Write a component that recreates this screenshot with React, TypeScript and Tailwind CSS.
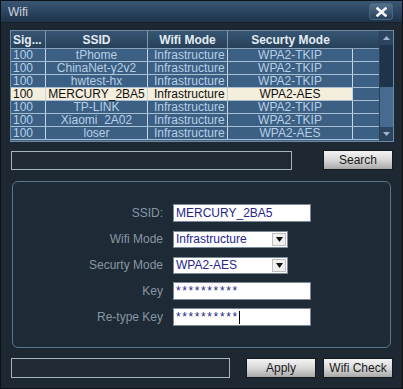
import React from 'react';

const rows = [
  { sig: '100', ssid: 'tPhome', mode: 'Infrastructure', sec: 'WPA2-TKIP' },
  { sig: '100', ssid: 'ChinaNet-y2v2', mode: 'Infrastructure', sec: 'WPA2-TKIP' },
  { sig: '100', ssid: 'hwtest-hx', mode: 'Infrastructure', sec: 'WPA2-TKIP' },
  { sig: '100', ssid: 'MERCURY_2BA5', mode: 'Infrastructure', sec: 'WPA2-AES', selected: true },
  { sig: '100', ssid: 'TP-LINK', mode: 'Infrastructure', sec: 'WPA2-TKIP' },
  { sig: '100', ssid: 'Xiaomi_2A02', mode: 'Infrastructure', sec: 'WPA2-TKIP' },
  { sig: '100', ssid: 'loser', mode: 'Infrastructure', sec: 'WPA2-AES' },
];

const font = { fontFamily: '"Liberation Sans", Arial, sans-serif' };

function Button({ label, className }: { label: string; className: string }) {
  return (
    <div
      className={`flex items-center justify-center h-[20px] border border-[#11191f] bg-gradient-to-b from-[#f4f4f4] via-[#d8d8d8] to-[#a9a9a9] text-[12px] text-[#1a1a1a] ${className}`}
    >
      {label}
    </div>
  );
}

function Select({ value }: { value: string }) {
  return (
    <div className="flex items-center w-[115px] h-[17px] bg-white border border-[#7a8a9a]">
      <span className="flex-1 pl-[2px] text-[12px] text-[#26268a] leading-none">{value}</span>
      <div className="flex items-center justify-center w-[14px] h-[13px] mr-[1px] bg-[#f0f0f0] border border-[#c0c0c0]">
        <svg width="7" height="5" viewBox="0 0 7 5">
          <path d="M0 0 L7 0 L3.5 5 Z" fill="#111" />
        </svg>
      </div>
    </div>
  );
}

function Field({ label, children }: { label: string; children: React.ReactNode }) {
  return (
    <div className="flex items-center">
      <div className="w-[160px] text-right text-[12px] text-[#8796a4] pr-[10px]">{label}</div>
      {children}
    </div>
  );
}

function TextBox({ value, caret, secret }: { value: string; caret?: boolean; secret?: boolean }) {
  return (
    <div className="flex items-center w-[138px] h-[18px] bg-white border border-[#7a8a9a] pl-[2px]">
      <span className={`text-[12px] text-[#26268a] leading-none ${secret ? 'tracking-[1.6px]' : ''}`}>{value}</span>
      {caret && <span className="w-[1px] h-[13px] bg-black" />}
    </div>
  );
}

export default function App() {
  return (
    <div
      className="w-[403px] h-[389px] bg-[#1d2833] border border-[#0c1218] flex flex-col overflow-hidden"
      style={font}
    >
      {/* title bar */}
      <div className="h-[22px] flex items-center justify-between bg-gradient-to-b from-[#3a5774] via-[#2b4561] to-[#1f3349] border-b border-[#16222e] pl-[7px] pr-[9px]">
        <span className="text-[12px] text-[#c9d4de]">Wifi</span>
        <div className="w-[24px] h-[17px] flex items-center justify-center bg-gradient-to-b from-[#53718d] to-[#2a425a] border border-[#4a6580] rounded-[3px]">
          <svg width="11" height="10" viewBox="0 0 11 10">
            <path d="M1.5 1.5 L9.5 8.5 M9.5 1.5 L1.5 8.5" stroke="#f4f6f8" strokeWidth="2.6" strokeLinecap="square" />
          </svg>
        </div>
      </div>

      {/* table */}
      <div className="mt-[7px] ml-[9px] w-[384px] h-[112px] border border-[#6f89a2] flex bg-[#3c5f84]">
        <div className="flex-1 flex flex-col">
          <div className="flex h-[18px] bg-gradient-to-b from-[#375674] to-[#264058] text-[12px] font-bold text-[#e4ebf2] border-b border-[#8aa3ba]">
            <div className="w-[35px] pl-[2px] flex items-center border-r border-[#7f97ad]">Sig...</div>
            <div className="w-[102px] flex items-center justify-center border-r border-[#7f97ad]">SSID</div>
            <div className="w-[80px] flex items-center justify-center border-r border-[#7f97ad]">Wifi Mode</div>
            <div className="w-[125px] flex items-center justify-center">Securty Mode</div>
            <div className="flex-1" />
          </div>
          {rows.map((r, i) => (
            <div
              key={i}
              className={`flex h-[13px] text-[12px] leading-none border-b border-[#a9c0d4] ${
                r.selected ? 'bg-[#f4eedc] text-[#111]' : 'text-[#b7cfe6]'
              }`}
            >
              <div className="w-[35px] pl-[2px] flex items-center border-r border-[#c5d6e4]">{r.sig}</div>
              <div className="w-[102px] flex items-center justify-center border-r border-[#c5d6e4]">{r.ssid}</div>
              <div className="w-[80px] flex items-center pl-[6px] border-r border-[#c5d6e4]">{r.mode}</div>
              <div className="w-[125px] flex items-center justify-center border-r border-[#c5d6e4]">{r.sec}</div>
              <div className="flex-1 bg-[#3c5f84]" />
            </div>
          ))}
        </div>
        {/* scrollbar */}
        <div className="w-[14px] flex flex-col bg-[#476b90] border-l border-[#2a4058]">
          <div className="h-[14px] flex items-center justify-center bg-[#2b4560]">
            <svg width="7" height="4" viewBox="0 0 7 4">
              <path d="M0 4 L7 4 L3.5 0 Z" fill="#9fb4c8" />
            </svg>
          </div>
          <div className="h-[42px] bg-[#1f344b]" />
          <div className="flex-1" />
          <div className="h-[14px] flex items-center justify-center bg-[#2b4560]">
            <svg width="7" height="4" viewBox="0 0 7 4">
              <path d="M0 0 L7 0 L3.5 4 Z" fill="#9fb4c8" />
            </svg>
          </div>
        </div>
      </div>

      {/* search row */}
      <div className="mt-[8px] flex items-center ml-[10px]">
        <div className="w-[281px] h-[19px] border border-[#a6b4c1] bg-[#1f2a35]" />
        <Button label="Search" className="ml-[31px] w-[70px]" />
      </div>

      {/* group box */}
      <div className="mt-[11px] ml-[11px] w-[379px] h-[167px] border border-[#587690] rounded-[6px] bg-[#1e2b37] flex flex-col pt-[22px] gap-[8px]">
        <Field label="SSID:">
          <TextBox value="MERCURY_2BA5" />
        </Field>
        <Field label="Wifi Mode">
          <Select value="Infrastructure" />
        </Field>
        <Field label="Securty Mode">
          <Select value="WPA2-AES" />
        </Field>
        <Field label="Key">
          <TextBox value="**********" secret />
        </Field>
        <Field label="Re-type Key">
          <TextBox value="**********" secret caret />
        </Field>
      </div>

      {/* bottom row */}
      <div className="mt-[10px] flex items-center ml-[10px]">
        <div className="w-[219px] h-[20px] border border-[#a6b4c1] bg-[#1f2a35]" />
        <Button label="Apply" className="ml-[16px] w-[70px]" />
        <Button label="Wifi Check" className="ml-[7px] w-[70px]" />
      </div>
    </div>
  );
}
